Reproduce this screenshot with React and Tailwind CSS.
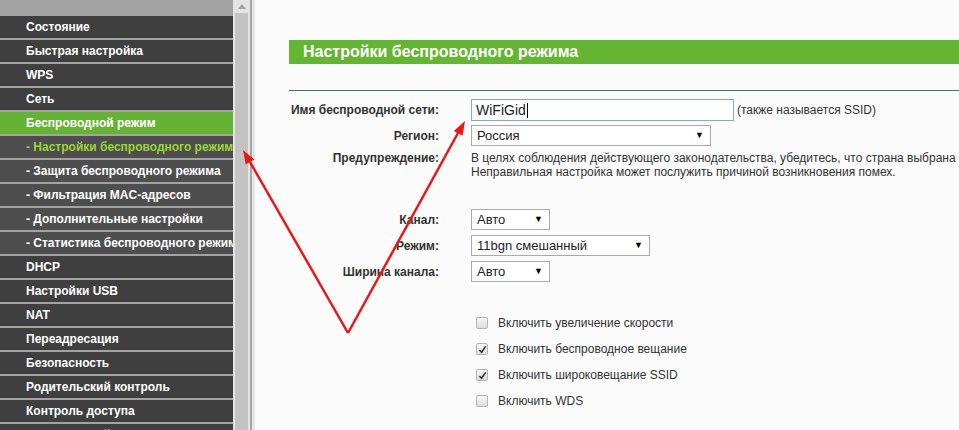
import React from "react";

const menu = [
  { label: "Состояние" },
  { label: "Быстрая настройка" },
  { label: "WPS" },
  { label: "Сеть" },
  { label: "Беспроводной режим", active: true },
  { label: "- Настройки беспроводного режима", sub: true, current: true },
  { label: "- Защита беспроводного режима", sub: true },
  { label: "- Фильтрация MAC-адресов", sub: true },
  { label: "- Дополнительные настройки", sub: true },
  { label: "- Статистика беспроводного режима", sub: true },
  { label: "DHCP" },
  { label: "Настройки USB" },
  { label: "NAT" },
  { label: "Переадресация" },
  { label: "Безопасность" },
  { label: "Родительский контроль" },
  { label: "Контроль доступа" },
  { label: "Расширенный" },
];

const font = { fontFamily: '"Liberation Sans", Arial, sans-serif' };

function MenuItem({ item }) {
  let bg = "bg-[#3f3f3f]";
  if (item.active) bg = "bg-[#66b235]";
  else if (item.sub) bg = "bg-[#4e4e4e]";
  return (
    <div
      className={`${bg} h-[22px] border-b-2 border-[#a3a3a3] box-content flex items-center pl-[26px] whitespace-nowrap overflow-hidden text-[12px] font-bold ${
        item.current ? "text-[#9fd33a]" : "text-white"
      }`}
    >
      {item.label}
    </div>
  );
}

function Select({ value, width }) {
  return (
    <div
      className={`${width} h-[21px] bg-white border border-[#a9a9a9] flex items-center justify-between pl-[5px] pr-[6px] text-[13px] text-[#222]`}
    >
      <span>{value}</span>
      <span className="text-[9px] text-black">▼</span>
    </div>
  );
}

function Checkbox({ checked, label }) {
  return (
    <div className="flex items-center h-[26px]">
      <div className="w-[12px] h-[12px] ml-[5px] rounded-[2px] border border-[#b5b5b5] bg-gradient-to-b from-[#f6f6f6] to-[#dedede] flex items-center justify-center">
        {checked && (
          <svg width="9" height="9" viewBox="0 0 10 10">
            <path d="M1.5 5.5 L4 8 L8.5 1.5" stroke="#333" strokeWidth="1.8" fill="none" />
          </svg>
        )}
      </div>
      <span className="ml-[10px] text-[12px] text-[#333]">{label}</span>
    </div>
  );
}

function Label({ children, className = "" }) {
  return (
    <div className={`w-[150px] text-right text-[12px] font-bold text-[#333] shrink-0 ${className}`}>
      {children}
    </div>
  );
}

export default function App() {
  return (
    <div className="relative w-[959px] h-[430px] overflow-hidden flex bg-[#fbfbfb]" style={font}>
      {/* sidebar */}
      <div className="w-[233px] shrink-0 bg-[#a3a3a3] pt-[16px]">
        {menu.map((m) => (
          <MenuItem key={m.label} item={m} />
        ))}
      </div>

      {/* scrollbar */}
      <div className="w-[17px] shrink-0 bg-[#e4e4e4] flex flex-col items-center">
        <div className="h-[13px] w-full flex items-center justify-center">
          <svg width="8" height="5" viewBox="0 0 8 5">
            <path d="M0 5 L4 0 L8 5 Z" fill="#a3a3a3" />
          </svg>
        </div>
        <div className="flex-1 w-[13px] bg-[#c3c3c3]" />
      </div>
      <div className="w-[2px] shrink-0 bg-[#a5a5a5]" />
      <div className="w-[3px] shrink-0 bg-[#e6e6e6]" />

      {/* main */}
      <div className="flex-1 pl-[34px] pt-[40px]">
        <div className="h-[24px] bg-[#64b533] flex items-center pl-[14px] text-[16px] font-bold text-white whitespace-nowrap">
          Настройки беспроводного режима
        </div>
        <div className="mt-[26px] h-[1px] bg-[#3e7a58]" />

        <div className="mt-[8px] flex items-center">
          <Label>Имя беспроводной сети:</Label>
          <div className="ml-[32px] w-[263px] h-[22px] bg-white border border-[#7eaad6] flex items-center pl-[4px] text-[14px] text-[#222]">
            WiFiGid<span className="w-px h-[15px] bg-black ml-[1px]" />
          </div>
          <span className="ml-[3px] text-[12px] text-[#333] whitespace-nowrap">(также называется SSID)</span>
        </div>

        <div className="mt-[4px] flex items-center">
          <Label>Регион:</Label>
          <div className="ml-[32px]">
            <Select value="Россия" width="w-[240px]" />
          </div>
        </div>

        <div className="mt-[5px] flex items-start">
          <Label className="leading-[14px]">Предупреждение:</Label>
          <div className="ml-[32px] text-[12px] leading-[14px] text-[#333] whitespace-nowrap">
            <div>В целях соблюдения действующего законодательства, убедитесь, что страна выбрана правильно.</div>
            <div>Неправильная настройка может послужить причиной возникновения помех.</div>
          </div>
        </div>

        <div className="mt-[30px] flex items-center">
          <Label>Канал:</Label>
          <div className="ml-[32px]">
            <Select value="Авто" width="w-[79px]" />
          </div>
        </div>
        <div className="mt-[5px] flex items-center">
          <Label>Режим:</Label>
          <div className="ml-[32px]">
            <Select value="11bgn смешанный" width="w-[179px]" />
          </div>
        </div>
        <div className="mt-[5px] flex items-center">
          <Label>Ширина канала:</Label>
          <div className="ml-[32px]">
            <Select value="Авто" width="w-[79px]" />
          </div>
        </div>

        <div className="mt-[28px] ml-[182px] flex flex-col">
          <Checkbox label="Включить увеличение скорости" />
          <Checkbox checked label="Включить беспроводное вещание" />
          <Checkbox checked label="Включить широковещание SSID" />
          <Checkbox label="Включить WDS" />
        </div>
      </div>

      {/* annotation arrows */}
      <svg className="absolute inset-0 pointer-events-none" width="959" height="430">
        <line x1="348" y1="333" x2="250" y2="162" stroke="#e8181a" strokeWidth="2.5" />
        <polygon points="243,150 254.3,159.6 245.7,164.6" fill="#e8181a" />
        <line x1="348" y1="333" x2="458" y2="133" stroke="#e8181a" strokeWidth="2.5" />
        <polygon points="465,121 462.6,135.7 453.8,130.9" fill="#e8181a" />
      </svg>
    </div>
  );
}
